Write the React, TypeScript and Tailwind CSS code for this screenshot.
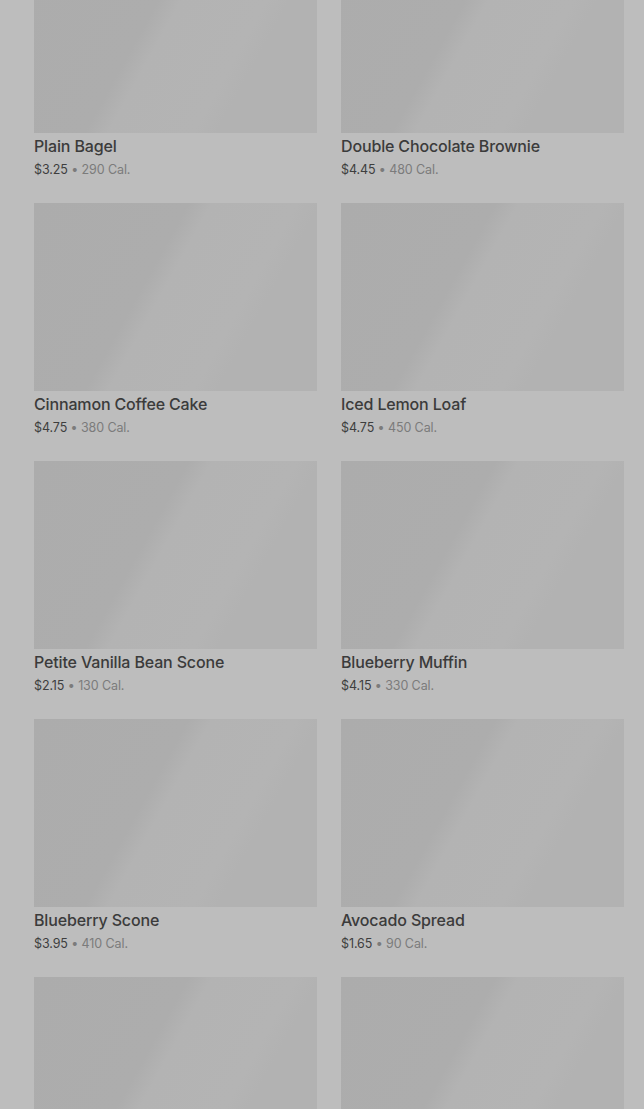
import React from "react";

const items: { name: string; price: string; cal: string }[] = [
  { name: "Plain Bagel", price: "$3.25", cal: "290 Cal." },
  { name: "Double Chocolate Brownie", price: "$4.45", cal: "480 Cal." },
  { name: "Cinnamon Coffee Cake", price: "$4.75", cal: "380 Cal." },
  { name: "Iced Lemon Loaf", price: "$4.75", cal: "450 Cal." },
  { name: "Petite Vanilla Bean Scone", price: "$2.15", cal: "130 Cal." },
  { name: "Blueberry Muffin", price: "$4.15", cal: "330 Cal." },
  { name: "Blueberry Scone", price: "$3.95", cal: "410 Cal." },
  { name: "Avocado Spread", price: "$1.65", cal: "90 Cal." },
  { name: "", price: "", cal: "" },
  { name: "", price: "", cal: "" },
];

function Card({ name, price, cal }: { name: string; price: string; cal: string }) {
  return (
    <div className="flex flex-col">
      <div className="h-[188px] w-full bg-[linear-gradient(119deg,#acacac_0%,#adadad_40%,#b3b3b3_46%,#b4b4b4_68%,#b2b2b2_74%,#b2b2b2_100%)]" />
      {name && (
        <>
          <div className="mt-[3px] text-[16px] leading-[20px] font-medium text-[#3b3b3b] tracking-[-0.15px]">{name}</div>
          <div className="mt-[4px] mb-[-1px] text-[12.5px] leading-[20px] text-[#3e3e3e] tracking-[-0.1px]">
            {price}
            <span className="text-[#7b7b7b]"> • {cal}</span>
          </div>
        </>
      )}
    </div>
  );
}

export default function App() {
  return (
    <div
      className="h-[1109px] w-[644px] overflow-hidden bg-[#bdbdbd]"
      style={{ fontFamily: "Inter, 'Noto Sans', sans-serif" }}
    >
      <div className="-mt-[55px] grid grid-cols-2 gap-x-[24px] gap-y-[24px] pl-[34px] pr-[20px]">
        {items.map((it, i) => (
          <Card key={i} {...it} />
        ))}
      </div>
    </div>
  );
}
